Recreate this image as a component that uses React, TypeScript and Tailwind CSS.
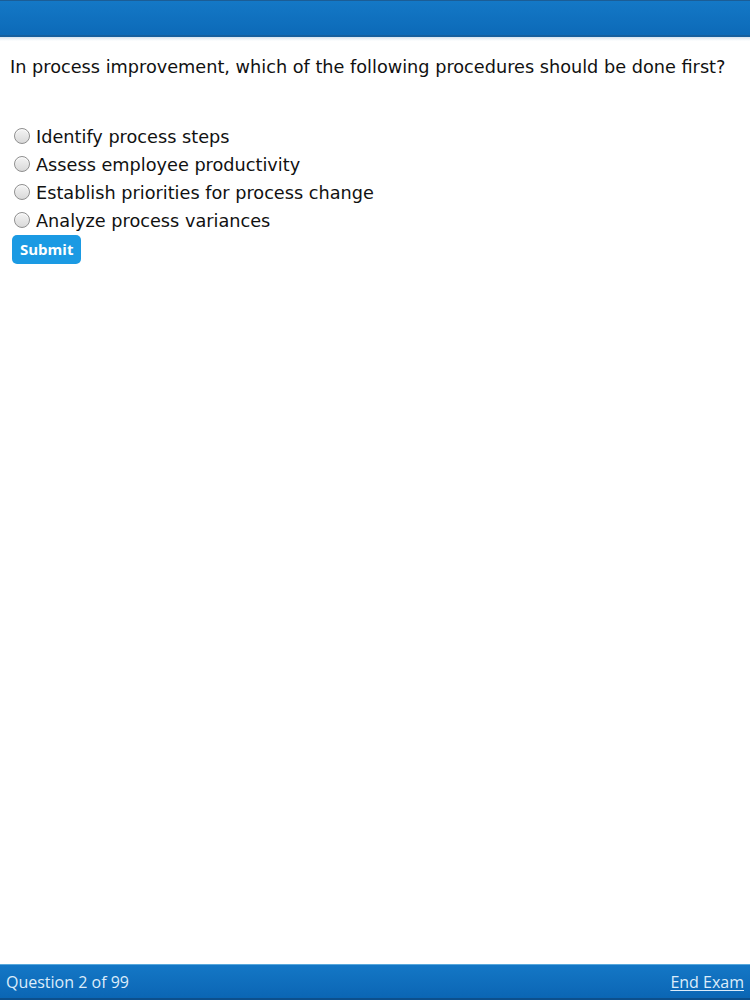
import { useState } from "react";

const OPTIONS = [
  "Identify process steps",
  "Assess employee productivity",
  "Establish priorities for process change",
  "Analyze process variances",
];

const body = { fontFamily: '"DejaVu Sans", Verdana, sans-serif' };
const ui = { fontFamily: '"Open Sans", "Noto Sans", sans-serif' };

export default function App() {
  const [picked, setPicked] = useState<number | null>(null);

  return (
    <div className="flex h-[1000px] w-[750px] flex-col bg-white" style={body}>
      {/* Header bar */}
      <header className="h-[37px] shrink-0 border-t border-[#1b5d96] border-b-2 border-b-[#155f9e] bg-gradient-to-b from-[#1478c6] to-[#0c6ab8]" />
      <div className="h-[4px] shrink-0 bg-gradient-to-b from-[#d6e3ee] to-white" />

      {/* Question */}
      <main className="flex-1 px-[10px] pt-[14px]">
        <p className="text-[17.7px] leading-[24px] text-[#111]">
          In process improvement, which of the following procedures should be done first?
        </p>

        <div className="mt-[44px] flex flex-col pl-[4px]">
          {OPTIONS.map((o, i) => (
            <label key={o} className="flex h-[28px] cursor-pointer items-center gap-[6px] text-[17.7px] text-[#111]">
              <span className="-mt-[3px] flex h-[16px] w-[16px] items-center justify-center rounded-full border border-[#8f8f8f] bg-gradient-to-b from-[#f4f4f4] to-[#d9d9d9] shadow-[inset_0_1px_1px_rgba(255,255,255,0.9)]">
                {picked === i && <span className="h-[7px] w-[7px] rounded-full bg-[#333]" />}
              </span>
              <input
                type="radio"
                name="answer"
                className="hidden"
                checked={picked === i}
                onChange={() => setPicked(i)}
              />
              {o}
            </label>
          ))}
        </div>

        <button
          type="button"
          className="ml-[2px] mt-0 h-[29px] rounded-[5px] bg-[#1b9ae3] px-[8px] text-[15px] font-bold text-white"
          style={ui}
        >
          Submit
        </button>
      </main>

      {/* Footer bar */}
      <footer
        className="flex h-[36px] shrink-0 items-center justify-between border-t border-[#58a8dc] border-b-2 border-b-[#0c4f8c] bg-gradient-to-b from-[#1477c6] to-[#0b66b4] px-[6px] text-[16px]"
        style={ui}
      >
        <span className="text-[#dcecfa]">Question 2 of 99</span>
        <a href="#" className="text-[#dcecfa] underline underline-offset-2">
          End Exam
        </a>
      </footer>
    </div>
  );
}
